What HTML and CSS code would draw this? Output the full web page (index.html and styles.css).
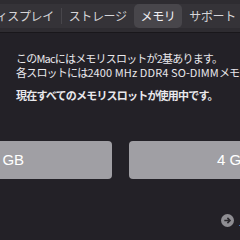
FILE: index.html
```html
<!DOCTYPE html>
<html>
<head>
  <title>このMacについて - メモリ</title>
  <link rel="stylesheet" href="styles.css">
</head>
<body>
  <div class="window">
    <div class="toolbar">
      <div class="segments">
        <span class="seg">ディスプレイ</span>
        <span class="divider"></span>
        <span class="seg">ストレージ</span>
        <span class="seg active">メモリ</span>
        <span class="seg">サポート</span>
        <span class="seg">サービス</span>
      </div>
    </div>

    <div class="content">
      <p class="info">
        このMacにはメモリスロットが2基あります。<br>
        各スロットには<span class="latin">2400 MHz DDR4 SO-DIMM</span>メモリを装着できます。
      </p>
      <p class="info strong">現在すべてのメモリスロットが使用中です。</p>

      <div class="slots">
        <div class="slot">4 GB</div>
        <div class="slot">4 GB</div>
      </div>

      <div class="footer">
        <span class="go">
          <svg width="13" height="13" viewBox="0 0 13 13">
            <circle cx="6.5" cy="6.5" r="6.5" fill="#8f8e93"/>
            <path d="M3.3 6.5h5.6M6.4 3.9l2.6 2.6-2.6 2.6" stroke="#2a282d" stroke-width="1.6" fill="none"/>
          </svg>
        </span>
        <span class="link">メモリのアップグレード手順</span>
      </div>
    </div>
  </div>
</body>
</html>
```

FILE: styles.css
```css
body {
  margin: 0;
  background-color: #232127;
  font-family: "Noto Sans CJK JP", "Noto Sans", sans-serif;
  color: #e9e8ec;
  overflow: hidden;
}

.window {
  width: 240px;
  height: 240px;
  overflow: hidden;
}

.toolbar {
  height: 33px;
  background-color: #2e2c31;
  border-bottom: 1px solid #19171b;
  padding-top: 4px;
  box-sizing: border-box;
  white-space: nowrap;
}

.segments {
  display: flex;
  align-items: center;
  height: 24px;
  margin-left: -22px;
  background-color: #353338;
  border-radius: 5px;
  width: max-content;
}

.seg {
  height: 24px;
  line-height: 24px;
  padding: 0 7px;
  font-size: 12px;
  letter-spacing: -0.4px;
  color: #d6d5d9;
  border-radius: 5px;
}

.seg.active {
  background-color: #48464b;
  color: #f0eff3;
}

.divider {
  width: 1px;
  height: 16px;
  background-color: #48464b;
}

.content {
  padding: 19px 0 0 16px;
  white-space: nowrap;
}

.info {
  margin: 0 0 10px 0;
  font-size: 11px;
  line-height: 13.5px;
  letter-spacing: -0.8px;
}

.latin {
  letter-spacing: 0.1px;
}

.strong {
  font-weight: bold;
}

.slots {
  display: flex;
  gap: 17px;
  margin-left: -114px;
  margin-top: 38px;
}

.slot {
  flex: none;
  width: 210px;
  height: 38px;
  line-height: 38px;
  text-align: center;
  background-color: #a09fa4;
  border-radius: 4px;
  color: #ffffff;
  font-family: "Liberation Sans", Arial, sans-serif;
  font-size: 15px;
}

.footer {
  display: flex;
  align-items: center;
  gap: 4px;
  margin-top: 34px;
  margin-left: 205px;
}

.go {
  display: flex;
}

.link {
  font-size: 11px;
  color: #d6d5d9;
}
```
